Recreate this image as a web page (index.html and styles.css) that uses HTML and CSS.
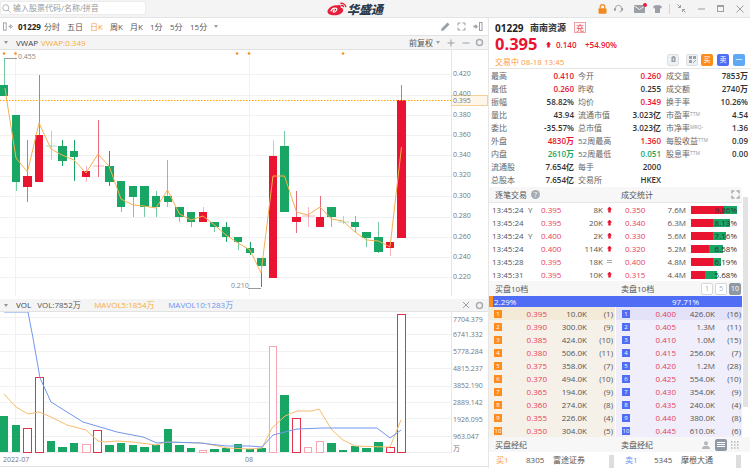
FILE: index.html
```html
<!DOCTYPE html>
<html lang="zh">
<head>
<meta charset="utf-8">
<title>华盛通</title>
<link rel="stylesheet" href="styles.css">
</head>
<body>
<div class="app">
  <header class="topbar">
    <div class="search">
      <svg class="ic-search" viewBox="0 0 10 10"><circle cx="4.2" cy="4.2" r="3.4"/><path d="M6.8 6.8 9.4 9.6"/></svg>
      <span>输入股票代码/名称/拼音</span>
    </div>
    <div class="logo">
      <svg class="logo-mark" viewBox="0 0 21 14"><path class="logo-red" d="M9 3C4 3.600 .3 7 .5 10c.3 3 4.500 4 8.500 3.600 4.500-.4 8-2.800 8-5.600 0-1.600-1.300-2.300-2.600-2.400.6-1.800-.2-3.200-2.400-2.800-.8.1-1.500.3-3 .2Z"/><path class="logo-white" d="M4 9.500c.8-2.300 3-3.600 5-3.400 1.400.1 1.600 1.200 1 2.200-.8 1.400-2.600 2.400-3.300 1.600-.5-.6.300-1.700 1.500-1.900" /><path class="logo-arc" d="M14 1.200c2.600-.8 5.500.9 5.800 3.800M14.500 3.200c1.300-.3 2.700.4 3 1.800"/></svg>
      <span class="logo-text">华盛通</span>
    </div>
    <div class="winctl">
      <svg class="wi w-lock" viewBox="0 0 9 10"><path class="s-orange" d="M2.200 4.500V3a2.300 2.300 0 0 1 4.600 0v1.500"/><rect class="f-orange" x=".5" y="4.200" width="8" height="5.600" rx="1"/></svg>
      <svg class="wi w-head" viewBox="0 0 10 10"><path class="s-grey" d="M1.500 7V5a3.500 3.500 0 0 1 7 0v2.500L6 9"/><rect class="f-grey" x="0" y="4.500" width="2" height="3"/><rect class="f-grey" x="8" y="4.500" width="2" height="3"/></svg>
      <span class="mail"><svg class="wi w-mail" viewBox="0 0 11 8"><rect class="f-grey" width="11" height="8"/><path class="s-white" d="M0 .8 5.500 4.500 11 .8"/></svg><i class="mail-dot"></i></span>
      <svg class="wi w-shirt" viewBox="0 0 9 8"><path class="f-grey" d="M2.800 0 0 1.500l1 2 1-.4V8h5V3.100l1 .4 1-2L6.200 0H5.300a1 1 0 0 1-1.600 0Z"/></svg>
      <i class="winsep"></i>
      <svg class="wi w-shrink" viewBox="0 0 9 9"><path class="s-grey" d="M.5.500 3.500 3.500M3.500 1v2.500H1M8.500 8.500 5.500 5.500M5.500 8V5.500H8"/></svg>
      <svg class="wi w-min" viewBox="0 0 7 7"><path class="s-grey" d="M0 4h7"/></svg>
      <svg class="wi w-max" viewBox="0 0 7 7"><rect class="s-grey" x=".5" y=".5" width="6" height="6"/><path class="s-grey" d="M0 1.500h7"/></svg>
      <svg class="wi w-close" viewBox="0 0 8 8"><path class="s-grey" d="M.5.500l7 7M7.500.500l-7 7"/></svg>
    </div>
  </header>

  <main class="main">
    <section class="left">
      <nav class="toolbar">
        <svg class="tb-toggle" viewBox="0 0 11 9"><rect x=".5" y=".5" width="3" height="8"/><path d="M6 4.500h2M8 2.500l2.500 2-2.500 2Z"/></svg>
        <b class="tb-code">01229</b>
        <span class="tb-item">分时</span>
        <span class="tb-item">五日</span>
        <span class="tb-item tb-on">日K</span>
        <span class="tb-item">周K</span>
        <span class="tb-item">月K</span>
        <span class="tb-item">1分</span>
        <span class="tb-item">5分</span>
        <span class="tb-item">15分</span>
        <i class="tri"></i>
        <span class="spacer"></span>
        <svg class="tb-ic" viewBox="0 0 9 9"><path class="f-grey" d="M0 9l.6-2.500L6.500.6l2 2-5.900 5.900Z"/></svg>
        <svg class="tb-ic" viewBox="0 0 9 9"><path class="s-grey" d="M1 3.500V1h2.500M8 3.500V1H5.500M1 5.500V8h2.500M8 5.500V8H5.500"/></svg>
        <svg class="tb-ic tb-last" viewBox="0 0 9 9"><path class="f-grey" d="M0 3.500h2V2l2.500 2.500L2 7V5.500H0Z"/><rect class="s-grey" x="6" y=".5" width="2.500" height="8"/></svg>
      </nav>
      <div class="subbar">
        <i class="tri tri-sub"></i>
        <span class="sb-name">VWAP</span>
        <span class="c-orange">VWAP:0.349</span>
        <span class="spacer"></span>
        <span class="sb-adj">前复权</span>
        <i class="tri"></i>
        <svg class="sb-ic" viewBox="0 0 8 8"><path class="s-grey" d="M4 .5v7M.5 4h7"/></svg>
        <svg class="sb-ic" viewBox="0 0 8 8"><path class="s-grey" d="M.5 4h7"/></svg>
        <svg class="sb-ic sb-last" viewBox="0 0 9 9"><circle class="s-grey2" cx="4.500" cy="4.500" r="3"/></svg>
      </div>

      <svg class="kchart" viewBox="0 50 488 246">
        <g class="grid">
          <path d="M0 74.500H451M0 95.500H451M0 115.500H451M0 135.500H451M0 155.500H451M0 176.500H451M0 196.500H451M0 217.500H451M0 237.500H451M0 257.500H451M0 277.500H451"/>
          <path d="M15.500 50V296M249.500 50V296"/>
        </g>
        <path class="axis" d="M451.500 50V296"/>
        <g class="dots">
          <circle cx="4" cy="53.500" r="1.300"/><circle cx="15.500" cy="53.500" r="1.300"/><circle cx="237" cy="53.500" r="1.300"/><circle cx="249" cy="53.500" r="1.300"/><circle cx="343" cy="53.500" r="1.300"/>
        </g>
        <path class="hi" d="M4.500 58.500H17M248 288.500H261"/>
        <text class="lab" x="18" y="59">0.455</text>
        <text class="lab" x="231" y="288">0.210</text>

        <g class="wick-g">
          <path d="M4.500 58V85M16.500 182V191M121.500 207V212M133.500 197V217M144.500 207V217M156.500 191V217M167.500 160V207M179.500 217V222M191.500 222V227M214.500 227V232M238.500 242V250M284.500 131V146M331.500 217V227M355.500 216V232M366.500 238V247M378.500 222V253" opacity=".6"/>
          <path d="M62.500 140V166M74.500 140V181M109.500 151V186M226.500 222V242M250.500 242V255M261.500 266V287"/>
        </g>
        <path class="wick-g lt" d="M51.500 131V160M46 146H57M343.500 216V224M338 222H349"/>
        <g class="wick-r">
          <path d="M27.500 140V202M39.500 75V135M98.500 120V177M296.500 191V233M320.500 196V217M401.500 85V100" opacity=".75"/>
        </g>
        <path class="wick-r lt" d="M86.500 166V182M203.500 207V212M273.500 140V156M308.500 207V227M93 166H104M302 216H315M390.500 248V256"/>
        <g class="body-g">
          <rect x="0" y="85" width="8" height="11"/><rect x="12" y="115" width="8" height="67"/><rect x="58" y="146" width="9" height="15"/><rect x="70" y="151" width="8" height="6"/><rect x="105" y="166" width="9" height="16"/><rect x="117" y="181" width="8" height="26"/><rect x="129" y="186" width="8" height="11"/><rect x="140" y="186" width="9" height="21"/><rect x="152" y="196" width="8" height="11"/><rect x="164" y="196" width="8" height="6"/><rect x="175" y="207" width="9" height="10"/><rect x="187" y="212" width="8" height="10"/><rect x="210" y="222" width="9" height="5"/><rect x="222" y="227" width="8" height="10"/><rect x="234" y="237" width="8" height="5"/><rect x="246" y="248" width="8" height="5"/><rect x="257" y="258" width="9" height="8"/><rect x="280" y="146" width="9" height="66"/><rect x="327" y="207" width="9" height="10"/><rect x="351" y="222" width="8" height="5"/><rect x="362" y="232" width="9" height="6"/><rect x="374" y="237" width="9" height="15"/>
        </g>
        <g class="body-r">
          <rect x="23" y="176" width="9" height="11"/><rect x="35" y="135" width="8" height="47"/><rect x="82" y="171" width="8" height="6"/><rect x="199" y="212" width="8" height="10"/><rect x="269" y="156" width="8" height="122"/><rect x="292" y="217" width="9" height="5"/><rect x="316" y="217" width="8" height="10"/><rect x="386" y="242" width="8" height="6"/><rect x="397" y="100" width="9" height="138"/>
        </g>
        <polyline class="vwap" points="5,88 8,108 16,158 27.500,172 39,123 51,149 62,155 74,160 86,173 98,154 109,166 121,199 133,205 144,206 156,208 167.500,190 179.500,214 191,220 203,216 214.500,225 226,235 238,243 250,250 261,273 273,176 284.500,176 296.500,212 308,215 320,207 331.500,219 343,221 355,232 366.500,240 378.500,241 390,247 401.500,147"/>
        <path class="pline" d="M0 100.500H451"/>
        <rect class="pbox" x="451.500" y="95.500" width="36" height="10"/>
        <g class="axis-t">
          <text x="453" y="76">0.420</text><text x="453" y="96">0.400</text><text x="453" y="117">0.380</text><text x="453" y="137">0.360</text><text x="453" y="157">0.340</text><text x="453" y="177">0.320</text><text x="453" y="198">0.300</text><text x="453" y="218">0.280</text><text x="453" y="239">0.260</text><text x="453" y="259">0.240</text><text x="453" y="279">0.220</text>
          <text x="453" y="103">0.395</text>
        </g>
      </svg>

      <div class="subbar volbar">
        <i class="tri tri-sub"></i>
        <span class="sb-name">VOL</span>
        <span class="v-val">VOL:7852万</span>
        <span class="c-orange v-m5">MAVOL5:1854万</span>
        <span class="c-blue v-m10">MAVOL10:1283万</span>
        <span class="spacer"></span>
        <svg class="sb-ic" viewBox="0 0 8 8"><path class="s-grey" d="M1 1l6 6M7 1l-6 6"/></svg>
        <svg class="sb-ic sb-last" viewBox="0 0 9 9"><circle class="s-grey2" cx="4.500" cy="4.500" r="3"/></svg>
      </div>

      <svg class="vchart" viewBox="0 312 488 141">
        <g class="grid">
          <path d="M0 317.500H451M0 334.500H451M0 351.500H451M0 368.500H451M0 386.500H451M0 402.500H451M0 418.500H451M0 436.500H451"/>
          <path d="M15.500 312V453M249.500 312V453"/>
        </g>
        <path class="axis" d="M451.500 312V453"/>
        <path class="base" d="M0 452.500H451"/>
        <g class="body-g">
          <rect x="0" y="416" width="8" height="36"/><rect x="12" y="425" width="8" height="27"/><rect x="47" y="441" width="8" height="11"/><rect x="58" y="447" width="9" height="5"/><rect x="70" y="443" width="8" height="9"/><rect x="105" y="445" width="9" height="7"/><rect x="117" y="443" width="8" height="9"/><rect x="129" y="445" width="8" height="7"/><rect x="140" y="447" width="9" height="5"/><rect x="152" y="445" width="8" height="7"/><rect x="164" y="429" width="8" height="23"/><rect x="175" y="445" width="9" height="7"/><rect x="187" y="448" width="8" height="4"/><rect x="210" y="449" width="9" height="3"/><rect x="222" y="448" width="8" height="4"/><rect x="234" y="444" width="8" height="8"/><rect x="246" y="449" width="8" height="3"/><rect x="257" y="448" width="9" height="4"/><rect x="280" y="395" width="9" height="57"/><rect x="327" y="443" width="9" height="9"/><rect x="339" y="450" width="8" height="2"/><rect x="351" y="446" width="8" height="6"/><rect x="362" y="448" width="9" height="4"/><rect x="374" y="442" width="9" height="10"/>
        </g>
        <g class="vol-r">
          <rect x="23.500" y="428.500" width="8" height="24"/><rect x="35.500" y="377.500" width="8" height="75"/><rect x="93.500" y="430.500" width="8" height="22"/><rect x="292.500" y="418.500" width="8" height="34"/><rect x="386.500" y="447.500" width="8" height="5"/>
          <rect x="397.500" y="314.500" width="8" height="138"/>
        </g>
        <g class="vol-r vol-lt">
          <rect x="82.500" y="444.500" width="8" height="8"/><rect x="199.500" y="450.500" width="7" height="2"/><rect x="269.500" y="346.500" width="7" height="106"/><rect x="304.500" y="447.500" width="7" height="5"/><rect x="316.500" y="441.500" width="7" height="11"/>
        </g>
        <polyline class="ma5" points="4,394 16,407 28,414 39,412 51,417 67,425 86,430 98,441 105,442 117,441 133,442 156,445 167,442 203,443 227,448 250,449 262,448 272,428 285,416 297,411 312,411 319,409 332,430 343,440 355,446 385,447 390,447 401,420"/>
        <polyline class="ma10" points="4,312 28,312 33,338 40,378 51,402 67,412 83,422 100,427 117,432 143,437 157,443 167,442 200,443 227,446 250,446 262,447 273,435 297,429 323,428 377,428 390,438 401,430"/>
        <g class="axis-t">
          <text x="453" y="322">7704.379</text><text x="453" y="337">6741.332</text><text x="453" y="354">5778.284</text><text x="453" y="371">4815.237</text><text x="453" y="388">3852.190</text><text x="453" y="405">2889.142</text><text x="453" y="422">1926.095</text><text x="453" y="439">963.047</text><text x="453" y="451">万</text>
        </g>
      </svg>
      <div class="xaxis"><span class="xa-1">2022-07</span><span class="xa-2">08</span></div>
    </section>

    <aside class="right">
      <div class="rt-title"><b class="rt-code">01229</b><b class="rt-name">南南资源</b><span class="rt-badge">充</span></div>
      <div class="rt-price"><b class="rt-big">0.395</b><i class="up up-big"></i><span class="rt-chg">0.140</span><span class="rt-pct">+54.90%</span></div>
      <div class="rt-status">
        <span class="c-orange-l rt-state">交易中 08-18 13:45</span>
        <span class="spacer"></span>
        <span class="rbtn rbtn-g"><svg class="rb-ic" viewBox="0 0 6 7"><path class="f-grey" d="M1 1.500a2 1.500 0 0 1 4 0V6H1Z"/><rect class="rb-hole" x="2.400" y="2.500" width="1.200" height="2"/></svg></span>
        <span class="rbtn rbtn-g rbtn-g2"><svg class="rb-ic" viewBox="0 0 7 7"><path class="f-grey" d="M0 0h3v3H0ZM4 0h3v3H4ZM0 4h3v3H0Z"/><path class="s-grey" d="M4 7l3-3"/></svg></span>
        <span class="rbtn rbtn-o">买</span>
        <span class="rbtn rbtn-b">卖</span>
        <span class="rbtn rbtn-s">一</span>
      </div>
      <div class="stats">
        <span>最高</span><b class="c-r">0.410</b><span class="pl4">今开</span><b class="c-r">0.260</b><span class="pl5">成交量</span><b>7853万</b>
        <span>最低</span><b class="c-r">0.260</b><span class="pl4">昨收</span><b>0.255</b><span class="pl5">成交额</span><b>2740万</b>
        <span>振幅</span><b>58.82%</b><span class="pl4">均价</span><b class="c-r">0.349</b><span class="pl5">换手率</span><b>10.26%</b>
        <span>量比</span><b>43.94</b><span class="pl4">流通市值</span><b>3.023亿</b><span class="pl5">市盈率<small>TTM</small></span><b>4.54</b>
        <span>委比</span><b>-35.57%</b><span class="pl4">总市值</span><b>3.023亿</b><span class="pl5">市净率<small>MRQ-</small></span><b>1.36</b>
        <span>外盘</span><b class="c-r">4830万</b><span class="pl4">52周最高</span><b class="c-r">1.360</b><span class="pl5">每股收益<small>TTM</small></span><b>0.09</b>
        <span>内盘</span><b class="c-g">2610万</b><span class="pl4">52周最低</span><b class="c-g">0.051</b><span class="pl5">股息率<small>TTM</small></span><b>0.00</b>
        <span>流通股</span><b>7.654亿</b><span class="pl4">每手</span><b>2000</b><span></span><span></span>
        <span>总股本</span><b>7.654亿</b><span class="pl4">交易所</span><b>HKEX</b><span></span><span></span>
      </div>
      <div class="lower">
        <div class="lower-main">
          <div class="sec-head sec-head-line">
            <span class="sh-l">逐笔交易<i class="qmark">?</i></span>
            <span class="sh-r">成交统计</span>
            <svg class="sh-ic" viewBox="0 0 9 9"><path class="s-grey2" d="M1 3.500V1h2.500M8 3.500V1H5.500M1 5.500V8h2.500M8 5.500V8H5.500"/></svg>
          </div>
          <div class="trow"><span class="t-t">13:45:24</span><span class="t-f">Y</span><span class="t-p">0.395</span><span class="t-v">8K</span><i class="up"></i><span class="t-p2">0.350</span><span class="t-v2">7.6M</span><span class="tbar"><i class="b-r" style="width:33px"></i><i class="b-g" style="width:13px"></i><em>9.86%</em></span></div>
          <div class="trow"><span class="t-t">13:45:24</span><span class="t-f"></span><span class="t-p">0.395</span><span class="t-v">20K</span><i class="up"></i><span class="t-p2">0.340</span><span class="t-v2">6.3M</span><span class="tbar"><i class="b-r" style="width:22px"></i><i class="b-g" style="width:17px"></i><em>8.13%</em></span></div>
          <div class="trow"><span class="t-t">13:45:24</span><span class="t-f">Y</span><span class="t-p">0.400</span><span class="t-v">2K</span><i class="up"></i><span class="t-p2">0.330</span><span class="t-v2">5.6M</span><span class="tbar"><i class="b-r" style="width:22px"></i><i class="b-g" style="width:13px"></i><em>7.16%</em></span></div>
          <div class="trow"><span class="t-t">13:45:24</span><span class="t-f"></span><span class="t-p">0.400</span><span class="t-v">114K</span><i class="up"></i><span class="t-p2">0.320</span><span class="t-v2">5.2M</span><span class="tbar"><i class="b-r" style="width:18px"></i><i class="b-g" style="width:14px"></i><em>6.58%</em></span></div>
          <div class="trow"><span class="t-t">13:45:28</span><span class="t-f"></span><span class="t-p">0.395</span><span class="t-v">18K</span><i class="eq"></i><span class="t-p2">0.400</span><span class="t-v2">4.8M</span><span class="tbar"><i class="b-r" style="width:22px"></i><i class="b-g" style="width:8px"></i><em>6.19%</em></span></div>
          <div class="trow"><span class="t-t">13:45:31</span><span class="t-f"></span><span class="t-p">0.395</span><span class="t-v">10K</span><i class="up"></i><span class="t-p2">0.315</span><span class="t-v2">4.4M</span><span class="tbar"><i class="b-r" style="width:14px"></i><i class="b-g" style="width:12px"></i><em>5.68%</em></span></div>
          <div class="sec-head">
            <span class="sh-l">买盘10档</span>
            <span class="sh-r2">卖盘10档</span>
            <div class="lvls"><span class="lvl">1</span><span class="lvl">5</span><span class="lvl lvl-on">10</span></div>
          </div>
          <div class="ratio"><i class="ratio-o"></i><span class="ratio-a">2.29%</span><span class="ratio-b">97.71%</span></div>
          <div class="book">
            <div class="side side-buy">
              <div class="brow first"><i>1</i><span class="p">0.395</span><span class="v">10.0K</span><span class="n">(1)</span></div>
              <div class="brow"><i>2</i><span class="p">0.390</span><span class="v">300.0K</span><span class="n">(9)</span></div>
              <div class="brow"><i>3</i><span class="p">0.385</span><span class="v">424.0K</span><span class="n">(10)</span></div>
              <div class="brow"><i>4</i><span class="p">0.380</span><span class="v">506.0K</span><span class="n">(11)</span></div>
              <div class="brow"><i>5</i><span class="p">0.375</span><span class="v">358.0K</span><span class="n">(7)</span></div>
              <div class="brow"><i>6</i><span class="p">0.370</span><span class="v">494.0K</span><span class="n">(10)</span></div>
              <div class="brow"><i>7</i><span class="p">0.365</span><span class="v">194.0K</span><span class="n">(9)</span></div>
              <div class="brow"><i>8</i><span class="p">0.360</span><span class="v">274.0K</span><span class="n">(8)</span></div>
              <div class="brow"><i>9</i><span class="p">0.355</span><span class="v">226.0K</span><span class="n">(4)</span></div>
              <div class="brow"><i>10</i><span class="p">0.350</span><span class="v">304.0K</span><span class="n">(5)</span></div>
            </div>
            <div class="side side-sell">
              <div class="brow first"><i>1</i><span class="p">0.400</span><span class="v">426.0K</span><span class="n">(16)</span></div>
              <div class="brow"><i>2</i><span class="p">0.405</span><span class="v">1.3M</span><span class="n">(11)</span></div>
              <div class="brow"><i>3</i><span class="p">0.410</span><span class="v">1.0M</span><span class="n">(15)</span></div>
              <div class="brow"><i>4</i><span class="p">0.415</span><span class="v">256.0K</span><span class="n">(7)</span></div>
              <div class="brow"><i>5</i><span class="p">0.420</span><span class="v">1.2M</span><span class="n">(28)</span></div>
              <div class="brow"><i>6</i><span class="p">0.425</span><span class="v">554.0K</span><span class="n">(10)</span></div>
              <div class="brow"><i>7</i><span class="p">0.430</span><span class="v">354.0K</span><span class="n">(9)</span></div>
              <div class="brow"><i>8</i><span class="p">0.435</span><span class="v">240.0K</span><span class="n">(4)</span></div>
              <div class="brow"><i>9</i><span class="p">0.440</span><span class="v">380.0K</span><span class="n">(8)</span></div>
              <div class="brow"><i>10</i><span class="p">0.445</span><span class="v">610.0K</span><span class="n">(6)</span></div>
            </div>
          </div>
        </div>
        <div class="rscroll"><i></i></div>
      </div>
      <div class="sec-head sec-head-wide">
        <span class="sh-l">买盘经纪</span>
        <span class="sh-r2">卖盘经纪</span>
        <div class="bk-tools">
          <svg class="bk-ic" viewBox="0 0 8 8"><circle class="f-grey2" cx="4" cy="2.200" r="2"/><path class="f-grey2" d="M0 8c0-2.500 1.500-3.200 4-3.200S8 5.500 8 8Z"/></svg>
          <span class="bk-list"><i></i><i></i><i></i></span>
          <svg class="bk-ic" viewBox="0 0 8 8"><path class="dotgrid" d="M0 1h8M0 4h8M0 7h8"/></svg>
        </div>
      </div>
      <div class="broker">
        <div class="bk-side"><span class="c-orange-l bk-n">买1</span><span class="bk-c">8305</span><span>富途证券</span><i class="bk-sb"></i></div>
        <div class="bk-side bk-side-s"><span class="c-blue bk-n">卖1</span><span class="bk-c">5345</span><span>摩根大通</span><i class="bk-sb"></i></div>
      </div>
    </aside>
  </main>
</div>
</body>
</html>
```
FILE: styles.css
```css
* { box-sizing: border-box; }
html, body { margin: 0; padding: 0; background: #fff; }
body {
  width: 750px; height: 468px; overflow: hidden;
  font-family: "Open Sans", "Noto Sans CJK SC", sans-serif;
  font-size: 8px; line-height: 1; color: #333;
}
i, em { font-style: normal; }
svg { display: block; flex: none; }
.spacer { flex: 1; }
.app { display: flex; flex-direction: column; height: 468px; }

.f-grey { fill: #9aa0a6; } .f-grey2 { fill: #b4b8bc; } .f-orange { fill: #f08a1c; }
.s-grey { fill: none; stroke: #9aa0a6; stroke-width: 1; }
.s-grey2 { fill: none; stroke: #a8adb2; stroke-width: 1.5; }
.s-orange { fill: none; stroke: #f08a1c; stroke-width: 1.2; }
.s-white { fill: none; stroke: #fff; stroke-width: .8; }

.c-orange { color: #f7ac3c; } .c-orange-l { color: #ff9a3d; } .c-blue { color: #6a94f5; }
.c-r { color: #e91430; } .c-g { color: #19a664; }

/* top bar */
.topbar { height: 18px; flex: none; display: flex; align-items: flex-start; background: #f4f4f4; border-bottom: 1px solid #e4e4e4; }
.search { width: 146px; height: 14px; margin-top: 1px; background: #fff; border: 1px solid #ececec; border-radius: 2px; display: flex; align-items: center; gap: 2px; padding-left: 1px; color: #9a9a9a; }
.ic-search { width: 9px; height: 9px; fill: none; stroke: #a4a4a4; stroke-width: .9; }
.logo { display: flex; align-items: center; margin-left: 181px; height: 17px; gap: 0; }
.logo-mark { width: 20px; height: 14px; }
.logo-red { fill: #e6203a; }
.logo-white { fill: none; stroke: #fff; stroke-width: 1.300; }
.logo-arc { fill: none; stroke: #e6203a; stroke-width: 1.400; }
.logo-text { font-family: "Noto Sans CJK SC", sans-serif; font-weight: 900; font-size: 12px; color: #2d3c4e; font-style: italic; }
.winctl { margin-left: auto; height: 17px; display: flex; align-items: center; padding-right: 6px; }
.wi { height: 9px; }
.w-lock { width: 9px; height: 10px; }
.w-head { width: 9px; margin-left: 7px; }
.mail { position: relative; margin-left: 10px; }
.w-mail { width: 13px; height: 8px; }
.mail-dot { position: absolute; top: -2px; right: -1px; width: 4px; height: 4px; border-radius: 50%; background: #e6203a; }
.w-shirt { width: 9px; margin-left: 7px; height: 8px; }
.winsep { width: 1px; height: 10px; background: #d4d4d4; margin-left: 7px; }
.w-shrink { width: 9px; margin-left: 7px; }
.w-min { width: 7px; height: 7px; margin-left: 12px; }
.w-max { width: 7px; height: 7px; margin-left: 12px; }
.w-close { width: 8px; height: 8px; margin-left: 12px; }

/* layout */
.main { flex: 1; display: flex; min-height: 0; }
.left { width: 489px; flex: none; display: flex; flex-direction: column; border-right: 1px solid #e6e6e6; }
.right { width: 261px; flex: none; display: flex; flex-direction: column; overflow: hidden; }

/* left bars */
.toolbar { height: 18px; flex: none; display: flex; align-items: center; background: #fff; padding-left: 3px; border-bottom: 1px solid #e2e2e2; }
.tb-toggle { width: 10px; height: 9px; fill: none; stroke: #8f959b; stroke-width: .9; }
.tb-code { margin-left: 5px; font-size: 8px; color: #222; width: 26px; }
.tb-item { color: #555; margin-right: 7px; white-space: nowrap; min-width: 13px; }
.tb-on { color: #ff9a3d; }
.tri { width: 0; height: 0; border-left: 2.500px solid transparent; border-right: 2.500px solid transparent; border-top: 3.500px solid #9aa0a6; }
.tb-ic { width: 9px; height: 9px; margin-right: 7px; }
.tb-last { width: 10px; margin-right: 5px; }
.subbar { height: 14px; flex: none; display: flex; align-items: center; background: #f4f4f4; border-bottom: 1px solid #e2e2e2; padding-left: 4px; color: #555; }
.sb-name { margin-left: 8px; margin-right: 3px; color: #444; }
.sb-adj { margin-right: 3px; color: #555; }
.sb-ic { width: 8px; height: 8px; margin-left: 7px; }
.sb-last { width: 9px; height: 9px; margin-left: 5px; margin-right: 4px; }
.tri-sub { border-top-color: #8f959b; }

/* charts */
.kchart { width: 488px; height: 246px; }
.vchart { width: 488px; height: 141px; }
.volbar { margin-top: 3px; height: 13px; }
.volbar .sb-name { margin-right: 6px; }
.v-val { color: #555; width: 57px; }
.v-m5 { width: 74px; }
.grid path { fill: none; stroke: #f1f1f1; stroke-width: 1; }
.axis { fill: none; stroke: #e6e6e6; }
.base { stroke: #eee; fill: none; }
.dots circle { fill: #ff8c1a; }
.hi { fill: none; stroke: #9a9a9a; }
.lab { font-size: 7px; fill: #888; font-family: "Open Sans", sans-serif; }
.axis-t text { font-size: 7px; fill: #777; font-family: "Open Sans", "Noto Sans CJK SC", sans-serif; }
.wick-g { fill: none; stroke: #19a664; }
.wick-r { fill: none; stroke: #dc3a52; }
.lt { opacity: .38; }
.body-g rect { fill: #19a664; }
.body-r rect { fill: #e91430; }
.vwap { fill: none; stroke: #f7b04f; stroke-width: 1; }
.pline { fill: none; stroke: #ffa500; stroke-dasharray: 1.500 1.500; }
.pbox { fill: #fff6ea; stroke: #f7cf99; }
.vol-r rect { fill: #fff; stroke: #e2324b; }
.vol-lt rect { stroke: #f5a6b2; }
.ma5 { fill: none; stroke: #f7bc6c; }
.ma10 { fill: none; stroke: #6f97ef; }
.xaxis { height: 14px; flex: none; display: flex; align-items: center; font-size: 7px; color: #777; border-bottom: 1px solid #e2e2e2; padding-left: 3px; }
.xa-1 { width: 242px; }

/* right top */
.rt-title { height: 18px; flex: none; display: flex; align-items: center; padding-left: 6px; padding-top: 1px; }
.rt-code { font-size: 10px; color: #222; width: 35px; }
.rt-name { font-size: 9px; color: #333; width: 44px; }
.rt-badge { width: 12px; height: 11px; border: 1px solid #f0a0a8; color: #e6405a; font-size: 8px; display: flex; align-items: center; justify-content: center; background: #fff5f5; }
.rt-price { height: 17px; flex: none; display: flex; align-items: center; padding-left: 6px; }
.rt-big { font-size: 16.500px; color: #e91430; width: 51px; }
.up { width: 5px; height: 6px; background: #e91430; display: block; clip-path: polygon(50% 0, 100% 50%, 75% 50%, 75% 100%, 25% 100%, 25% 50%, 0 50%); }
.rt-chg { color: #e91430; font-weight: 600; margin-left: 5px; width: 29px; }
.rt-pct { color: #e91430; font-weight: 600; }
.rt-status { height: 16px; flex: none; display: flex; align-items: center; padding: 0 5px 2px 6px; border-bottom: 1px solid #e6e6e6; gap: 4px; }
.rt-state { margin-top: 4px; }
.rbtn { width: 12px; height: 12px; border-radius: 2px; display: flex; align-items: center; justify-content: center; font-size: 7px; color: #fff; }
.rbtn-g { background: #eef1f3; border: 1px solid #dde1e5; }
.rbtn-g2 { margin-left: 3px; margin-right: -1px; }
.rb-ic { width: 7px; height: 7px; }
.rb-hole { fill: #eef1f3; }
.rbtn-o { background: #ff8c1a; }
.rbtn-b { background: #4f6df5; }
.rbtn-s { background: #5fa8f5; }

.stats { flex: none; padding: 0 0 1px 2px; display: grid; grid-template-columns: 40px 43px 44px 43px 50px 37px; grid-auto-rows: 13px; align-items: center; height: 118px; color: #666; }
.stats > span { white-space: nowrap; }
.stats > b { text-align: right; color: #333; font-weight: 600; white-space: nowrap; }
.stats > b.c-r { color: #e91430; } .stats > b.c-g { color: #19a664; }
.stats small { font-size: 5px; color: #999; vertical-align: 2px; }
.pl4 { padding-left: 4px; } .pl5 { padding-left: 5px; }

/* lower */
.lower { display: flex; flex: none; }
.lower-main { width: 253px; flex: none; }
.rscroll { width: 7px; flex: none; padding: 10px 1px 0 1px; }
.rscroll i { display: block; height: 210px; background: #e2e2e2; }
.sec-head { height: 15px; display: flex; align-items: center; background: #f7f7f7; color: #555; font-size: 8px; padding-left: 6px; }
.sec-head-line { height: 16px; border-bottom: 1px solid #e6e6e6; }
.sh-l { width: 126px; display: flex; align-items: center; }
.sh-r { width: 100px; }
.sh-r2 { width: 70px; }
.qmark { width: 9px; height: 9px; border-radius: 50%; background: #a6adb4; color: #fff; font-size: 7px; margin-left: 4px; display: flex; align-items: center; justify-content: center; }
.sh-ic { width: 9px; height: 9px; margin-left: 10px; }
.trow { height: 13px; display: flex; align-items: center; padding-left: 3px; color: #555; }
.t-t { width: 36px; flex: none; }
.t-f { width: 13px; flex: none; }
.t-p { width: 32px; flex: none; color: #e8405a; }
.t-v { width: 30px; flex: none; text-align: right; }
.trow .up, .eq { margin-left: 4px; flex: none; }
.eq { width: 5px; height: 3px; border-top: 1px solid #aaa; border-bottom: 1px solid #aaa; display: block; }
.t-p2 { width: 20px; margin-left: 13px; flex: none; color: #e8405a; }
.t-v2 { width: 41px; flex: none; text-align: right; }
.tbar { width: 46px; height: 8px; margin-left: 5px; flex: none; display: flex; position: relative; }
.b-r { background: #e91430; display: block; }
.b-g { background: #19a664; display: block; }
.tbar em { position: absolute; right: 0; top: 0; line-height: 8px; color: #333; }
.lvls { display: flex; gap: 2px; margin-left: 10px; }
.lvl { width: 12px; height: 12px; border: 1px solid #d4d8dc; border-radius: 2px; display: flex; align-items: center; justify-content: center; color: #a6adb4; font-size: 7px; background: #fff; }
.lvl-on { background: #8f99a3; color: #fff; border-color: #8f99a3; }
.ratio { height: 11px; background: #4f6df5; color: #fff; display: flex; align-items: center; }
.ratio-o { width: 4px; height: 11px; background: #ff8c1a; display: block; }
.ratio-a { margin-left: 1px; width: 178px; }
.book { display: flex; height: 130px; }
.side { width: 126px; flex: none; }
.side-buy { background: #f6f1e8; margin-right: 1px; }
.side-sell { background: #f0eefa; }
.side-buy .first { background: #f3ead7; }
.side-sell .first { background: #e4e2f8; }
.brow { height: 13px; display: flex; align-items: center; padding-left: 5px; color: #555; }
.brow i { width: 8px; height: 8px; flex: none; background: #ff8c1a; color: #fff; font-size: 6px; display: flex; align-items: center; justify-content: center; }
.side-sell .brow i { background: #4f6df5; }
.brow .p { width: 45px; text-align: right; color: #e8405a; }
.brow .v { width: 40px; text-align: right; }
.brow .n { width: 26px; text-align: right; }
.side-sell .brow { padding-left: 6px; }
.side-sell .brow .p { width: 46px; }
.side-sell .brow .v { width: 39px; }
.bk-tools { margin-left: 11px; display: flex; align-items: center; }
.bk-ic { width: 8px; height: 8px; }
.bk-list { width: 12px; height: 12px; margin: 0 4px 0 5px; background: #8f99a3; border-radius: 2px; display: flex; flex-direction: column; justify-content: center; gap: 1px; padding: 0 2px; }
.bk-list i { height: 1px; background: #fff; display: block; }
.dotgrid { fill: none; stroke: #b4b8bc; stroke-width: 1.500; stroke-dasharray: 1.500 1.500; }
.broker { display: flex; height: 16px; padding-top: 1px; color: #555; }
.bk-side { width: 126px; height: 13px; flex: none; margin-right: 1px; display: flex; align-items: center; padding-left: 7px; position: relative; }
.bk-side-s { padding-left: 9px; }
.bk-n { width: 30px; }
.bk-side-s .bk-n { width: 29px; }
.bk-c { width: 27px; }
.bk-sb { position: absolute; right: 1px; top: 2px; width: 5px; height: 13px; background: #ddd; }
```
